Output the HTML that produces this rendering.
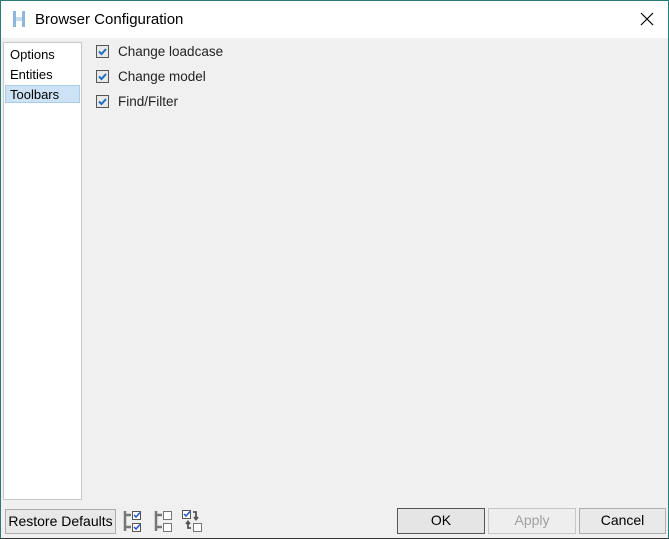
<!DOCTYPE html>
<html><head><style>
*{margin:0;padding:0;box-sizing:border-box}
body{width:669px;height:539px;overflow:hidden;background:#f0f0f0;font-family:"Liberation Sans",sans-serif;font-size:13px;color:#000;position:relative}
.win{position:absolute;left:0;top:0;width:669px;height:539px;border:1px solid #2b7a78;border-bottom-color:#333}
.title{position:absolute;left:1px;top:1px;width:667px;height:37px;background:#fff}
.abs{position:absolute}
.list{left:3px;top:42px;width:79px;height:458px;background:#fff;border:1px solid #c8c8c8}
.item{position:absolute;left:6px;font-size:13px}
.sel{left:5px;top:85px;width:75px;height:18px;background:#cde3f5;border:1px solid #a8cde9}
.cb{width:13px;height:13px;border:1px solid #555;background:#e8e8e8}
.btn{border:1px solid #adadad;background:#e9e9e9;text-align:center;line-height:23px;font-size:14px}
.lbl{font-size:13.5px;color:#222}
</style></head><body>
<div class="win"></div>
<div class="title"></div>
<svg class="abs" style="left:11px;top:10px" width="16" height="18" viewBox="0 0 16 18">
<path d="M2 1h3v6h6V1h3v16h-3v-6H5v6H2z" fill="#8fb6de"/><path d="M5 7h6v4H5z" fill="#c7dbef"/></svg>
<div class="abs" style="left:35px;top:11px;font-size:15px">Browser Configuration</div>
<svg class="abs" style="left:640px;top:12px" width="14" height="14"><path d="M1 1L13 13M13 1L1 13" stroke="#000" stroke-width="1.2"/></svg>
<div class="abs list"></div>
<div class="abs sel"></div>
<div class="item" style="left:10px;top:47px">Options</div>
<div class="item" style="left:10px;top:67px">Entities</div>
<div class="item" style="left:10px;top:87px">Toolbars</div>
<div class="abs cb" style="left:96px;top:45px"></div>
<div class="abs cb" style="left:96px;top:70px"></div>
<div class="abs cb" style="left:96px;top:95px"></div>
<svg class="abs" style="left:96px;top:45px" width="13" height="63"><g fill="none" stroke="#1d6fc4" stroke-width="2"><path d="M3 6.5l2.5 2.5 4.5-5"/><path d="M3 31.5l2.5 2.5 4.5-5"/><path d="M3 56.5l2.5 2.5 4.5-5"/></g></svg>
<div class="abs lbl" style="left:118px;top:44px">Change loadcase</div>
<div class="abs lbl" style="left:118px;top:69px">Change model</div>
<div class="abs lbl" style="left:118px;top:94px">Find/Filter</div>
<div class="abs btn" style="left:5px;top:509px;width:111px;height:25px;background:#e8e8e8">Restore Defaults</div>
<svg class="abs" style="left:122px;top:509px" width="84" height="24">
<g fill="none" stroke="#777" stroke-width="2.5"><path d="M3 2v20M3 6h6M3 18h6"/><path d="M34 2v20M34 6h6M34 18h6"/></g>
<rect x="10.5" y="2.5" width="8" height="8" fill="#fff" stroke="#555"/><rect x="10.5" y="14.5" width="8" height="8" fill="#fff" stroke="#555"/>
<path d="M12 6l2 2 4-4.5M12 18l2 2 4-4.5" stroke="#2255cc" fill="none" stroke-width="1.5"/>
<rect x="41.5" y="2.5" width="8" height="8" fill="#fff" stroke="#777"/><rect x="41.5" y="14.5" width="8" height="8" fill="#fff" stroke="#777"/>
<rect x="60.5" y="1.5" width="8" height="8" fill="#fff" stroke="#555"/><path d="M62 5l2 2 4-4.5" stroke="#2255cc" fill="none" stroke-width="1.5"/>
<rect x="71.5" y="14.5" width="8" height="8" fill="#fff" stroke="#777"/>
<path d="M71 3h3v6M72 8l2 2.5 2-2.5M69 19h-3v-5M64 15l2-2.5 2 2.5" stroke="#555" fill="none" stroke-width="1.8"/>
</svg>
<div class="abs btn" style="left:397px;top:508px;width:88px;height:26px;border-color:#555;background:#e5e5e5">OK</div>
<div class="abs btn" style="left:488px;top:508px;width:88px;height:26px;border-color:#c6c6c6;color:#a0a0a0;background:#eeeeee">Apply</div>
<div class="abs btn" style="left:579px;top:508px;width:87px;height:26px">Cancel</div>
</body></html>
